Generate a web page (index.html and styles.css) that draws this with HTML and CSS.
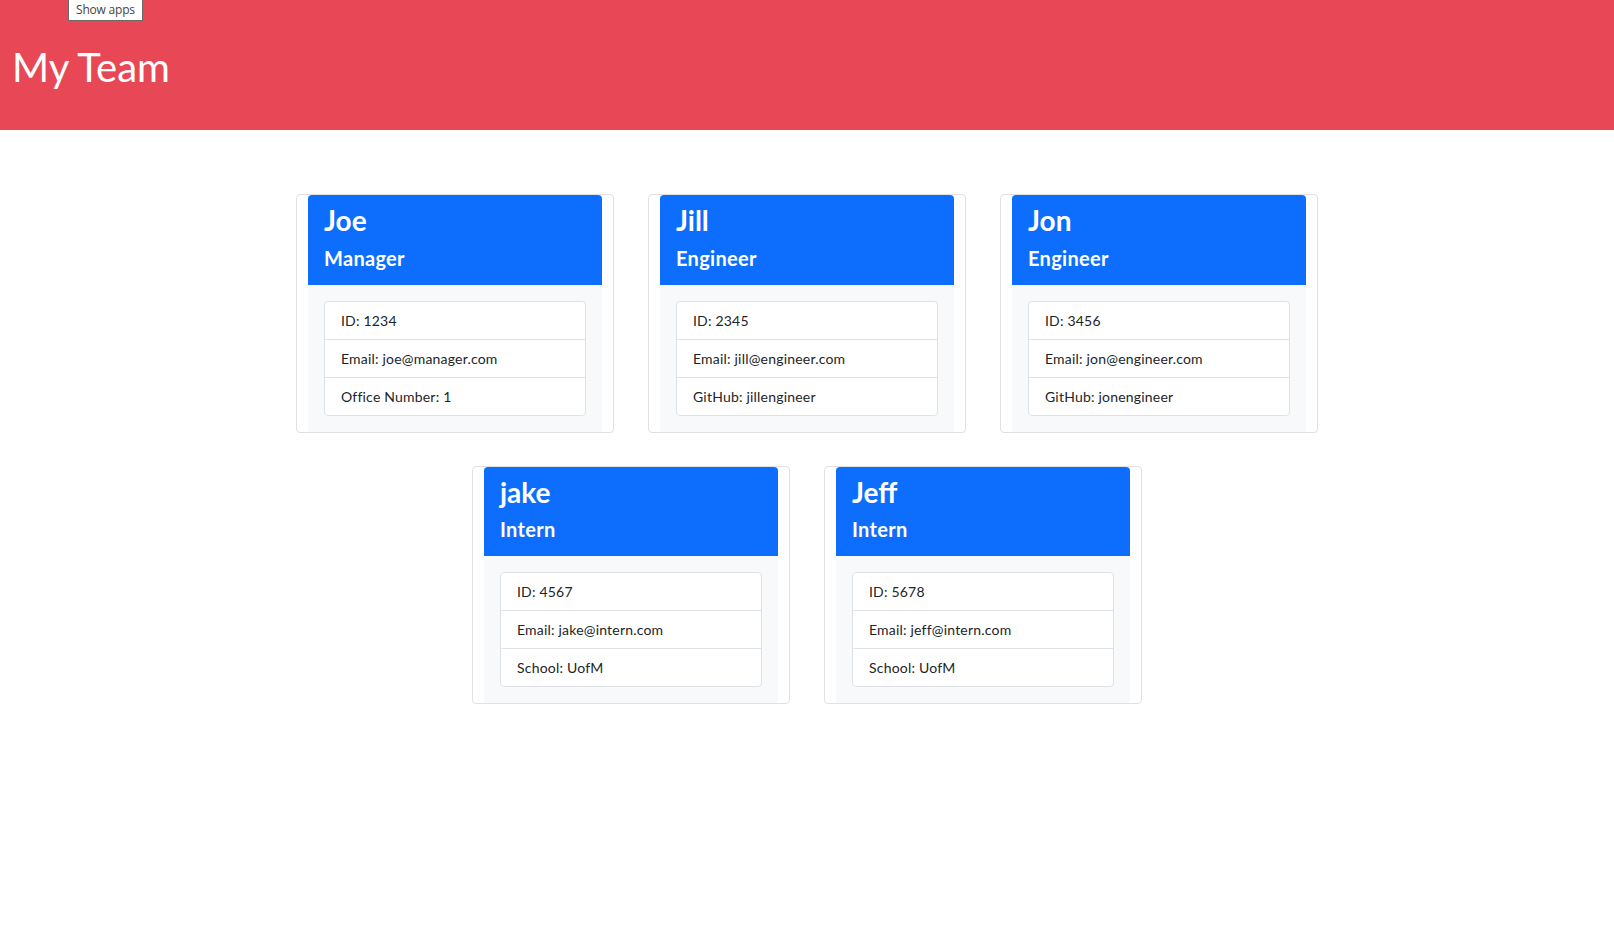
FILE: index.html
```html
<!DOCTYPE html>
<html lang="en">
<head>
<meta charset="utf-8">
<title>My Team</title>
<link rel="stylesheet" href="styles.css">
</head>
<body>
<header class="hero">
  <h1 class="hero-title">My Team</h1>
</header>
<div class="tooltip">Show apps</div>
<main class="team">
  <div class="card">
    <div class="card-header">
      <h3 class="name">Joe</h3>
      <h5 class="role">Manager</h5>
    </div>
    <div class="card-body">
      <ul class="list">
        <li class="item">ID: 1234</li>
        <li class="item">Email: joe@manager.com</li>
        <li class="item">Office Number: 1</li>
      </ul>
    </div>
  </div>
  <div class="card">
    <div class="card-header">
      <h3 class="name">Jill</h3>
      <h5 class="role">Engineer</h5>
    </div>
    <div class="card-body">
      <ul class="list">
        <li class="item">ID: 2345</li>
        <li class="item">Email: jill@engineer.com</li>
        <li class="item">GitHub: jillengineer</li>
      </ul>
    </div>
  </div>
  <div class="card">
    <div class="card-header">
      <h3 class="name">Jon</h3>
      <h5 class="role">Engineer</h5>
    </div>
    <div class="card-body">
      <ul class="list">
        <li class="item">ID: 3456</li>
        <li class="item">Email: jon@engineer.com</li>
        <li class="item">GitHub: jonengineer</li>
      </ul>
    </div>
  </div>
  <div class="card">
    <div class="card-header">
      <h3 class="name">jake</h3>
      <h5 class="role">Intern</h5>
    </div>
    <div class="card-body">
      <ul class="list">
        <li class="item">ID: 4567</li>
        <li class="item">Email: jake@intern.com</li>
        <li class="item">School: UofM</li>
      </ul>
    </div>
  </div>
  <div class="card">
    <div class="card-header">
      <h3 class="name">Jeff</h3>
      <h5 class="role">Intern</h5>
    </div>
    <div class="card-body">
      <ul class="list">
        <li class="item">ID: 5678</li>
        <li class="item">Email: jeff@intern.com</li>
        <li class="item">School: UofM</li>
      </ul>
    </div>
  </div>
</main>
</body>
</html>
```
FILE: styles.css
```css
* { box-sizing: border-box; }

body {
  margin: 0;
  font-family: "Lato", "Open Sans", sans-serif;
  color: #212529;
  background: #fff;
  position: relative;
}

.hero {
  height: 130px;
  background: #e84855;
  display: flex;
  align-items: center;
  padding: 3px 12px 0 12px;
}

.hero-title {
  margin: 0;
  color: #fff;
  font-size: 40px;
  font-weight: 400;
  line-height: 1.2;
}

.tooltip {
  position: absolute;
  left: 68px;
  top: -1px;
  width: 75px;
  height: 22px;
  background: #fff;
  border: 1px solid #6b6b6b;
  color: #444;
  font-family: "Open Sans", sans-serif;
  font-size: 12px;
  letter-spacing: -0.2px;
  line-height: 20px;
  padding: 0 7px;
  white-space: nowrap;
}

.team {
  width: 1022px;
  margin: 64px auto 0;
  display: flex;
  flex-wrap: wrap;
  justify-content: center;
  column-gap: 34px;
  row-gap: 33px;
}

.card {
  width: 318px;
  border: 1px solid #dfe1e4;
  border-radius: 4px;
  padding: 0 11px;
  background: #fff;
}

.card-header {
  background: #0d6efd;
  color: #fff;
  padding: 9px 16px 7px;
  border-radius: 4px 4px 0 0;
}

.name {
  margin: 0 0 8px;
  font-size: 28px;
  font-weight: 700;
  line-height: 1.2;
}

.role {
  margin: 0 0 8px;
  font-size: 20px;
  font-weight: 700;
  letter-spacing: 0.3px;
  line-height: 1.2;
}

.card-body {
  background: #f8f9fa;
  padding: 16px;
}

.list {
  list-style: none;
  margin: 0;
  padding: 0;
  border: 1px solid #dee2e6;
  border-radius: 4px;
  background: #fff;
}

.item {
  padding: 8px 16px;
  font-size: 14px;
  letter-spacing: 0.2px;
  line-height: 21px;
}

.item + .item {
  border-top: 1px solid #dee2e6;
}
```
